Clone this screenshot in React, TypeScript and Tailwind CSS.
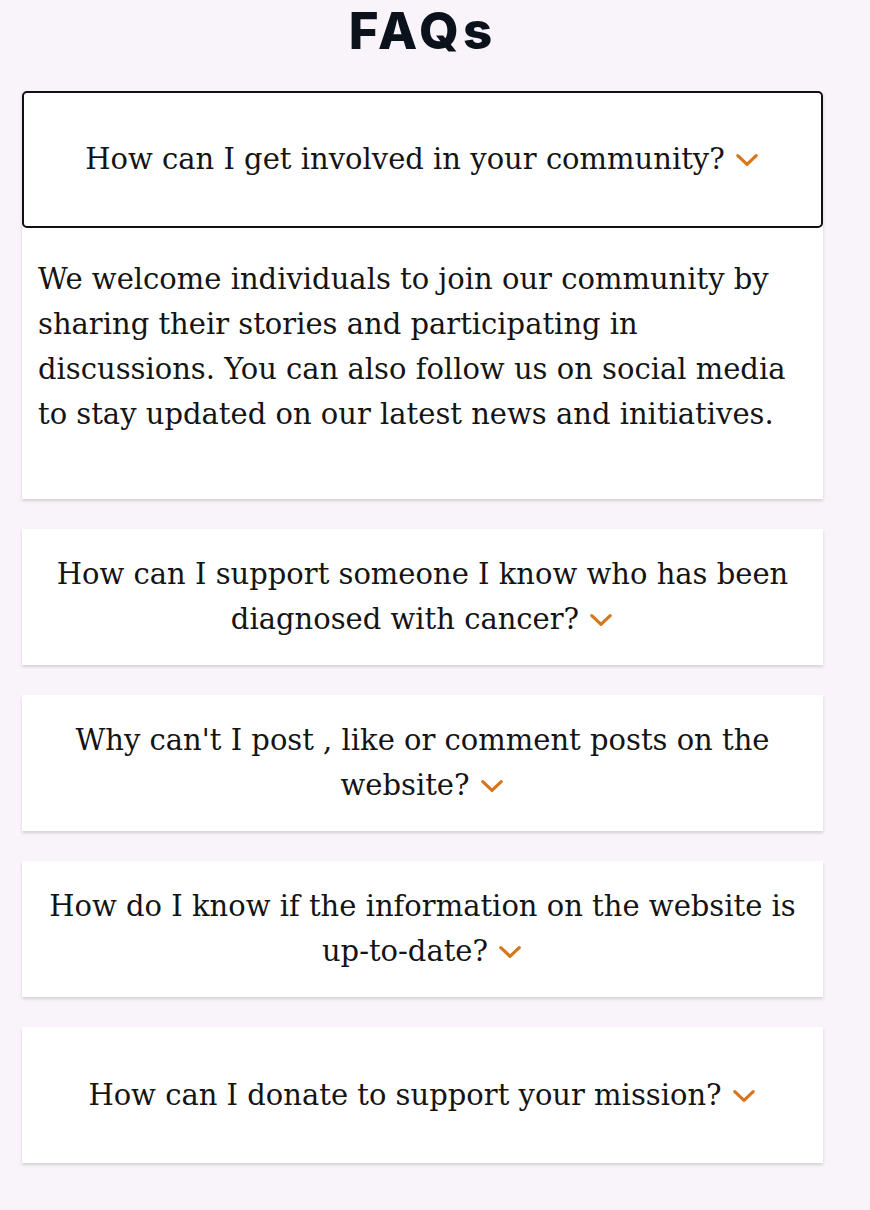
import { useState } from 'react';

interface Faq {
  question: string;
  answer: string;
}

const faqs: Faq[] = [
  {
    question: 'How can I get involved in your community?',
    answer:
      'We welcome individuals to join our community by sharing their stories and participating in discussions. You can also follow us on social media to stay updated on our latest news and initiatives.',
  },
  {
    question: 'How can I support someone I know who has been diagnosed with cancer?',
    answer:
      'Listen without judgement, offer practical help with everyday tasks, and stay in touch throughout their treatment.',
  },
  {
    question: "Why can't I post , like or comment posts on the website?",
    answer: 'You need to be signed in to your account to post, like or comment on posts.',
  },
  {
    question: 'How do I know if the information on the website is up-to-date?',
    answer: 'Our team reviews the content regularly and every article shows the date it was last updated.',
  },
  {
    question: 'How can I donate to support your mission?',
    answer: 'You can donate through our donation page using a card or bank transfer.',
  },
];

function Chevron() {
  return (
    <svg
      viewBox="0 0 24 24"
      className="inline-block w-[26px] h-[26px] ml-[9px] align-[-4px]"
      fill="none"
      stroke="#d7771d"
      strokeWidth={3}
      strokeLinecap="round"
      strokeLinejoin="round"
    >
      <path d="M3.5 8 L12 16 L20.5 8" />
    </svg>
  );
}

// keep the last word glued to the chevron, like the original
function Question({ text }: { text: string }) {
  const cut = text.lastIndexOf(' ');
  return (
    <span>
      {text.slice(0, cut + 1)}
      <span className="whitespace-nowrap">
        {text.slice(cut + 1)}
        <Chevron />
      </span>
    </span>
  );
}

export default function App() {
  const [open, setOpen] = useState<number | null>(0);

  return (
    <div
      className="min-h-[1210px] bg-[#f8f4f9] text-[#141414]"
      style={{ fontFamily: '"DejaVu Serif", "Liberation Serif", serif' }}
    >
      <div className="w-[801px] ml-[22px] pb-10">
        <h1 className="text-center text-[51px] leading-[62px] font-extrabold text-[#0b121c] tracking-[4px] font-['Inter',sans-serif]">
          FAQs
        </h1>

        <div className="mt-[29px] flex flex-col gap-[30px]">
          {faqs.map((faq, i) => {
            const isOpen = open === i;
            return (
              <div key={faq.question} className="flex flex-col shadow-[0_2px_3px_rgba(0,0,0,0.15)]">
                <button
                  type="button"
                  onClick={() => setOpen(isOpen ? null : i)}
                  className={
                    isOpen
                      ? 'h-[137px] flex items-center justify-center px-5 bg-white border-2 border-[#111] rounded-[5px] text-center text-[29px] leading-[45px]'
                      : 'h-[136px] flex items-center justify-center px-5 bg-white text-center text-[29px] leading-[45px]'
                  }
                >
                  <Question text={faq.question} />
                </button>
                {isOpen && (
                  <div className="bg-white px-4 pt-[29px] pb-[62px] text-[29px] leading-[45px]">
                    <p>{faq.answer}</p>
                  </div>
                )}
              </div>
            );
          })}
        </div>
      </div>
    </div>
  );
}
